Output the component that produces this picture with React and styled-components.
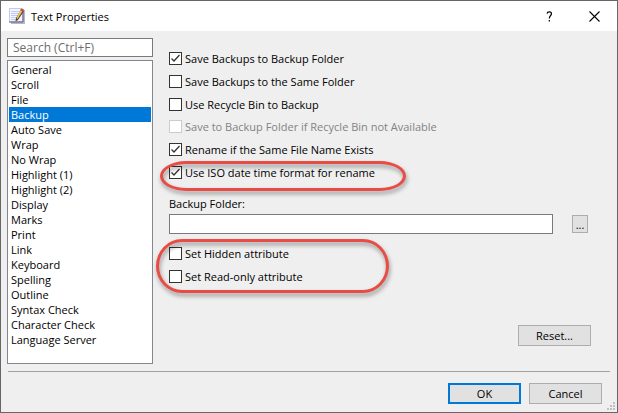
import React, { useState } from 'react';
import styled, { createGlobalStyle } from 'styled-components';

const GlobalStyle = createGlobalStyle`
  * {
    box-sizing: border-box;
  }

  body {
    margin: 0;
    background: #efefef;
    color: #000;
    font-family: 'Open Sans', 'Noto Sans', sans-serif;
    font-size: 11px;
    line-height: 15px;
  }

  button, input {
    margin: 0;
    font: inherit;
    color: inherit;
  }
`;

const Dialog = styled.main`
  display: flex;
  flex-direction: column;
  min-height: 100vh;
  border: 1px solid #666;
  background: #efefef;
`;

const TitleBar = styled.header`
  display: flex;
  align-items: center;
  height: 30px;
  padding-left: 8px;
  background: #fff;
`;

const Title = styled.h1`
  flex: 1;
  margin: 0 0 0 6px;
  font-size: 11px;
  font-weight: 400;
`;

const TitleButton = styled.button`
  display: flex;
  align-items: center;
  justify-content: center;
  width: 45px;
  height: 30px;
  padding: 0;
  border: 0;
  background: transparent;
`;

const Body = styled.div`
  display: flex;
  flex: 1;
  gap: 16px;
  padding: 7px 6px;
`;

const Sidebar = styled.nav`
  display: flex;
  flex-direction: column;
  gap: 3px;
  width: 146px;
`;

const Search = styled.input`
  width: 100%;
  height: 19px;
  padding: 0 5px;
  border: 1px solid #7a7a7a;
  background: #fff;
  font-size: 12px;

  &::placeholder {
    color: #6d6d6d;
    opacity: 1;
  }
`;

const PageList = styled.ul`
  flex: 1;
  margin: 0;
  padding: 1px;
  border: 1px solid #828790;
  background: #fff;
  list-style: none;
`;

const PageItem = styled.button`
  display: block;
  width: 100%;
  height: 15px;
  padding: 0 2px;
  border: 0;
  background: ${({ $selected }) => ($selected ? '#0078d7' : 'transparent')};
  color: ${({ $selected }) => ($selected ? '#fff' : '#000')};
  text-align: left;
`;

const Panel = styled.section`
  display: flex;
  flex: 1;
  flex-direction: column;
  padding: 14px 20px 18px 0;
`;

const Options = styled.div`
  display: flex;
  flex-direction: column;
  align-items: flex-start;
  gap: 10px;
  margin-bottom: 9px;
`;

const CheckLabel = styled.label`
  display: flex;
  align-items: center;
  gap: 3px;
  height: 13px;
  color: ${({ $disabled }) => ($disabled ? '#838383' : '#000')};
  white-space: nowrap;
`;

const CheckBox = styled.span`
  display: grid;
  width: 13px;
  height: 13px;

  & > * {
    grid-area: 1 / 1;
  }

  input {
    width: 13px;
    height: 13px;
    appearance: none;
    border: 1px solid #333;
    background: #fff;
  }

  input:disabled {
    border-color: #ccc;
  }

  svg {
    pointer-events: none;
    visibility: hidden;
  }

  input:checked + svg {
    visibility: visible;
  }
`;

const Marked = styled.div`
  position: relative;
`;

const Ring = styled.span`
  position: absolute;
  top: ${({ $top }) => $top}px;
  left: ${({ $left }) => $left}px;
  width: ${({ $width }) => $width}px;
  height: ${({ $height }) => $height}px;
  border: 3px solid #e84c45;
  border-radius: 26px / ${({ $height }) => $height / 2}px;
  filter: drop-shadow(1px 3px 2px rgba(0, 0, 0, 0.4));
  pointer-events: none;
`;

const FolderField = styled.div`
  display: flex;
  flex-direction: column;
  gap: 3px;
  margin: 8px 0 13px;
`;

const FolderRow = styled.div`
  display: flex;
  align-items: center;
  gap: 19px;
  padding-right: 3px;
`;

const FolderInput = styled.input`
  flex: 1;
  min-width: 0;
  height: 20px;
  padding: 0 4px;
  border: 1px solid #7a7a7a;
  background: #fff;
`;

const Button = styled.button`
  width: 73px;
  height: 21px;
  padding: 0;
  border: ${({ $primary }) => ($primary ? '2px solid #0078d7' : '1px solid #adadad')};
  background: #e1e1e1;
`;

const BrowseButton = styled(Button)`
  width: 16px;
  height: 18px;
`;

const ResetButton = styled(Button)`
  margin-top: auto;
  align-self: flex-end;
`;

const Footer = styled.footer`
  display: flex;
  justify-content: flex-end;
  gap: 8px;
  margin: 0 7px;
  padding: 11px 8px 8px 0;
  border-top: 1px solid #a0a0a0;
`;

const Grip = styled.svg`
  position: absolute;
  right: 3px;
  bottom: 3px;
`;

const pages = [
  'General', 'Scroll', 'File', 'Backup', 'Auto Save', 'Wrap', 'No Wrap',
  'Highlight (1)', 'Highlight (2)', 'Display', 'Marks', 'Print', 'Link',
  'Keyboard', 'Spelling', 'Outline', 'Syntax Check', 'Character Check',
  'Language Server',
];

const NotepadIcon = () => (
  <svg width="16" height="16" viewBox="0 0 16 16" aria-hidden="true">
    <path d="M2 2h14v14H2z" fill="#b9b9c0" />
    <path d="M.5 .5h13v13H.5z" fill="#f3f6ff" stroke="#c3c9e6" />
    <path d="M2 3.500h9M2 5.500h8M2 7.500h7M2 9.500h6M2 11.500h5" stroke="#bccaf5" />
    <path d="M0 14h14V1" fill="none" stroke="#5c5f8e" />
    <path d="M12 2l3 1-6 9-2.500 1.500L7 10z" fill="#5b4430" />
    <path d="M11.500 2l2 1-5 8-1-1z" fill="#f6c35c" />
    <path d="M12 .5l2.500 1-1 2-2.500-1z" fill="#d9493a" />
  </svg>
);

const Check = ({ label, checked = false, disabled = false }) => (
  <CheckLabel $disabled={disabled}>
    <CheckBox>
      <input type="checkbox" defaultChecked={checked} disabled={disabled} />
      <svg width="13" height="13" viewBox="0 0 13 13" aria-hidden="true">
        <path d="M2.5 6.5L5 9l5.500-6" fill="none" stroke="#333" strokeWidth="1.3" />
      </svg>
    </CheckBox>
    {label}
  </CheckLabel>
);

export default () => {
  const [page, setPage] = useState('Backup');

  return (
    <>
      <GlobalStyle />
      <Dialog>
        <TitleBar>
          <NotepadIcon />
          <Title>Text Properties</Title>
          <TitleButton aria-label="Help">
            <svg width="7" height="11" viewBox="0 0 7 11" fill="none" stroke="#000" strokeWidth="1.2">
              <path d="M1 2.500C1.500 .5 5.500 .3 5.500 2.800C5.500 4.500 3.300 4.700 3.300 7.500M3.300 9v1.500" />
            </svg>
          </TitleButton>
          <TitleButton aria-label="Close">
            <svg width="11" height="11" viewBox="0 0 11 11" stroke="#000" strokeWidth="1.1">
              <path d="M.5 .5l10 10M10.500 .5l-10 10" />
            </svg>
          </TitleButton>
        </TitleBar>
        <Body>
          <Sidebar>
            <Search type="text" placeholder="Search (Ctrl+F)" aria-label="Search" />
            <PageList>
              {pages.map(name => (
                <li key={name}>
                  <PageItem $selected={name === page} onClick={() => setPage(name)}>
                    {name}
                  </PageItem>
                </li>
              ))}
            </PageList>
          </Sidebar>
          <Panel>
            <Options>
              <Check label="Save Backups to Backup Folder" checked />
              <Check label="Save Backups to the Same Folder" />
              <Check label="Use Recycle Bin to Backup" />
            </Options>
            <Options>
              <Check label="Save to Backup Folder if Recycle Bin not Available" disabled />
              <Check label="Rename if the Same File Name Exists" checked />
              <Marked>
                <Check label="Use ISO date time format for rename" checked />
                <Ring $top={-5} $left={-9} $width={246} $height={30} />
              </Marked>
            </Options>
            <FolderField>
              <label htmlFor="backup-folder">Backup Folder:</label>
              <FolderRow>
                <FolderInput id="backup-folder" type="text" />
                <BrowseButton aria-label="Browse">...</BrowseButton>
              </FolderRow>
            </FolderField>
            <Marked>
              <Options>
                <Check label="Set Hidden attribute" />
                <Check label="Set Read-only attribute" />
              </Options>
              <Ring $top={-8} $left={-13} $width={233} $height={54} />
            </Marked>
            <ResetButton>Reset...</ResetButton>
          </Panel>
        </Body>
        <Footer>
          <Button $primary>OK</Button>
          <Button>Cancel</Button>
        </Footer>
        <Grip width="8" height="8" viewBox="0 0 8 8" fill="#bfbfbf" aria-hidden="true">
          <path d="M6 0h2v2H6zM3 3h2v2H3zM6 3h2v2H6zM0 6h2v2H0zM3 6h2v2H3zM6 6h2v2H6z" />
        </Grip>
      </Dialog>
    </>
  );
};
